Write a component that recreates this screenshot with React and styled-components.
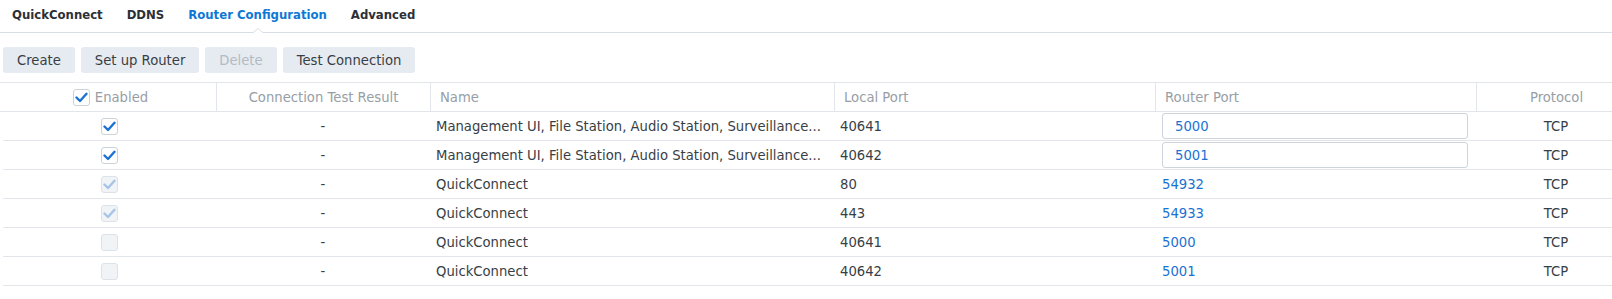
import React from 'react';
import styled, {createGlobalStyle} from 'styled-components';

const blue = '#1a72d2';
const text = '#383e45';
const muted = '#979ea6';
const line = '#e2e6eb';

const GlobalStyle = createGlobalStyle`
  body {
    margin: 0;
    background: #fff;
    font-family: "DejaVu Sans", Verdana, sans-serif;
    font-size: 13.2px;
    color: ${text};
  }
`;

// columns: Enabled, Connection Test Result, Name, Local Port, Router Port, Protocol
const headColumns = '216px 214px 404px 321px 321px 1fr';
// body rows start 3px in, so the first column is 3px narrower
const rowColumns = '213px 214px 404px 321px 321px 1fr';

const TabBar = styled.div`
  display: flex;
  height: 32px;
  border-bottom: 1px solid #d8dee5;
`;

const Tab = styled.div`
  position: relative;
  padding: 0 12px;
  line-height: 31px;
  font-weight: bold;
  font-size: 11.7px;
  color: ${props => props.active ? '#0d78d5' : '#2c3036'};

  /* little notch on the bar line under the active tab */
  ${props => props.active && `
    &::before, &::after {
      content: '';
      position: absolute;
      left: 50%;
      margin-left: -6px;
      border: 6px solid transparent;
      border-top: 0;
    }
    &::before {
      bottom: -1px;
      border-bottom: 5px solid #d8dee5;
    }
    &::after {
      bottom: -2px;
      border-bottom: 5px solid #fff;
    }
  `}
`;

const Toolbar = styled.div`
  display: flex;
  gap: 6px;
  padding: 14px 3px 0;
`;

const Button = styled.button`
  height: 26px;
  padding: 0 14px;
  border: none;
  border-radius: 3px;
  background: #e6ebf1;
  font-family: inherit;
  font-size: 13.2px;
  color: ${props => props.disabled ? '#b3bac2' : text};
`;

const Table = styled.div`
  margin-top: 9px;
`;

const HeaderRow = styled.div`
  display: grid;
  grid-template-columns: ${headColumns};
  height: 28px;
  border-top: 1px solid ${line};
  border-bottom: 1px solid ${line};
`;

const HeaderCell = styled.div`
  display: flex;
  align-items: center;
  justify-content: ${props => props.center ? 'center' : 'flex-start'};
  gap: 5px;
  padding-left: ${props => props.padLeft || (props.center ? '0' : '9px')};
  color: ${muted};
  & + & {
    border-left: 1px solid ${line};
  }
`;

const Row = styled.div`
  display: grid;
  grid-template-columns: ${rowColumns};
  height: 28px;
  margin-left: 3px;
  border-bottom: 1px solid ${line};
`;

const Cell = styled.div`
  display: flex;
  align-items: center;
  justify-content: ${props => props.center ? 'center' : 'flex-start'};
  padding-left: ${props => props.padLeft || (props.center ? '0' : '9px')};
  padding-right: ${props => props.center ? '0' : '8px'};
  color: ${props => props.link ? blue : text};
  white-space: nowrap;
  overflow: hidden;
`;

const PortInput = styled.div`
  flex: 1;
  height: 24px;
  display: flex;
  align-items: center;
  padding-left: 12px;
  border: 1px solid #cdd4dc;
  border-radius: 3px;
  color: ${blue};
`;

const Box = styled.span`
  width: 15px;
  height: 15px;
  flex: none;
  display: flex;
  align-items: center;
  justify-content: center;
  border: 1px solid ${props => props.disabled ? '#dde2e8' : '#cbd2da'};
  border-radius: 3px;
  background: ${props => props.disabled ? '#f1f4f7' : '#fff'};
`;

const Check = ({checked, disabled}) => (
  <Box disabled={disabled}>
    {checked && (
      <svg width="13" height="11" viewBox="0 0 13 11">
        <path d="M1.5 5.5 L5 9 L11.5 1.8" fill="none"
          stroke={disabled ? '#a7c4e6' : blue} strokeWidth="2.4"
          strokeLinecap="round" strokeLinejoin="round"/>
      </svg>
    )}
  </Box>
);

const longName = 'Management UI, File Station, Audio Station, Surveillance...';

const rules = [
  {on: true, name: longName, local: '40641', router: '5000', edit: true},
  {on: true, name: longName, local: '40642', router: '5001', edit: true},
  {on: true, locked: true, name: 'QuickConnect', local: '80', router: '54932'},
  {on: true, locked: true, name: 'QuickConnect', local: '443', router: '54933'},
  {on: false, locked: true, name: 'QuickConnect', local: '40641', router: '5000'},
  {on: false, locked: true, name: 'QuickConnect', local: '40642', router: '5001'},
];

export default function App() {
  return (
    <>
      <GlobalStyle/>
      <TabBar>
        <Tab>QuickConnect</Tab>
        <Tab>DDNS</Tab>
        <Tab active>Router Configuration</Tab>
        <Tab>Advanced</Tab>
      </TabBar>
      <Toolbar>
        <Button>Create</Button>
        <Button>Set up Router</Button>
        <Button disabled>Delete</Button>
        <Button>Test Connection</Button>
      </Toolbar>
      <Table>
        <HeaderRow>
          <HeaderCell center padLeft="5px"><Check checked/>Enabled</HeaderCell>
          <HeaderCell center>Connection Test Result</HeaderCell>
          <HeaderCell>Name</HeaderCell>
          <HeaderCell>Local Port</HeaderCell>
          <HeaderCell>Router Port</HeaderCell>
          <HeaderCell center padLeft="24px">Protocol</HeaderCell>
        </HeaderRow>
        <div>
          {rules.map((r, i) => (
            <Row key={i}>
              <Cell center><Check checked={r.on} disabled={r.locked}/></Cell>
              <Cell center>-</Cell>
              <Cell padLeft="6px">{r.name}</Cell>
              <Cell padLeft="6px">{r.local}</Cell>
              <Cell link padLeft="7px">
                {r.edit ? <PortInput>{r.router}</PortInput> : r.router}
              </Cell>
              <Cell center padLeft="24px">TCP</Cell>
            </Row>
          ))}
        </div>
      </Table>
    </>
  );
}
